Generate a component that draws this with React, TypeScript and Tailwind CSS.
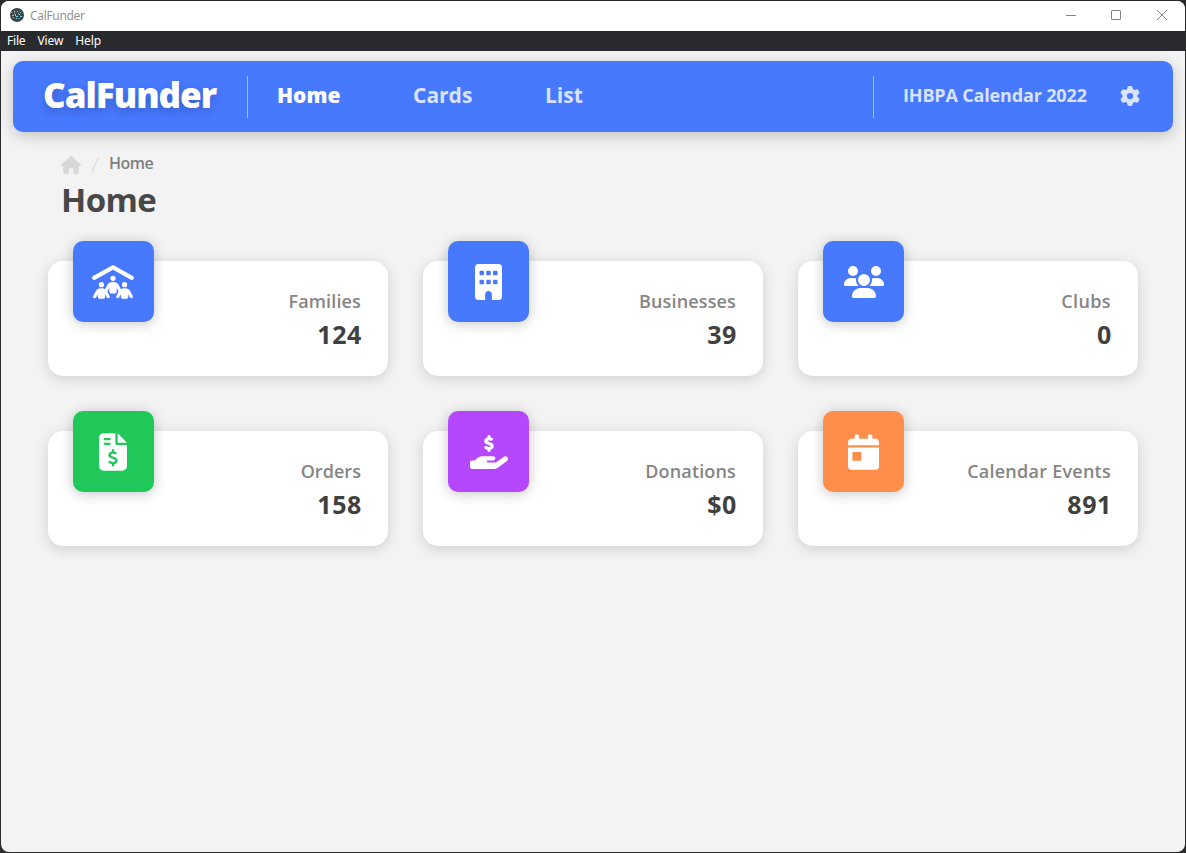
import React from "react";
import { FaBuilding, FaCalendarDay, FaFileInvoiceDollar, FaGear, FaHandHoldingDollar, FaHouse, FaPeopleRoof, FaUsers } from "react-icons/fa6";

type Stat = { label: string; value: string; labelTrack: string; color: string; icon: React.ReactNode };

const stats: Stat[] = [
  { label: "Families", value: "124", labelTrack: "tracking-[0.15px]", color: "bg-[#4779ff]", icon: <FaPeopleRoof className="mr-[2px] h-[34px] w-[42px]" /> },
  { label: "Businesses", value: "39", labelTrack: "tracking-[0.15px]", color: "bg-[#4779ff]", icon: <FaBuilding className="h-[36px] w-[27px]" /> },
  { label: "Clubs", value: "0", labelTrack: "tracking-[0.4px]", color: "bg-[#4779ff]", icon: <FaUsers className="h-[32px] w-[40px]" /> },
  { label: "Orders", value: "158", labelTrack: "tracking-[0.05px]", color: "bg-[#1fc858]", icon: <FaFileInvoiceDollar className="mr-[2px] h-[38px] w-[28px]" /> },
  { label: "Donations", value: "$0", labelTrack: "tracking-[0.15px]", color: "bg-[#b548ff]", icon: <FaHandHoldingDollar className="h-[34px] w-[38px]" /> },
  { label: "Calendar Events", value: "891", labelTrack: "tracking-[0.25px]", color: "bg-[#ff8e4a]", icon: <FaCalendarDay className="h-[36px] w-[31px]" /> },
];

function StatCard({ stat }: { stat: Stat }) {
  return (
    <div className="flex h-[115px] justify-between rounded-[15px] bg-white pl-[25px] pr-[27px] shadow-[0_3px_14px_rgba(0,0,0,0.15)]">
      <div className={`-mt-5 flex size-[81px] items-center justify-center rounded-[10px] text-white shadow-[0_2px_13px_rgba(0,0,0,0.22)] ${stat.color}`}>
        {stat.icon}
      </div>
      <div className="flex flex-col items-end pt-[27px]">
        <span className={`text-[18px] font-[550] leading-[27px] text-[#858585] ${stat.labelTrack}`}>{stat.label}</span>
        <span className="-mr-px mt-px text-[25px] font-bold leading-[36px] tracking-[0.6px] text-[#404040]">{stat.value}</span>
      </div>
    </div>
  );
}

export default function App() {
  return (
    <div className="h-[853px] w-[1186px] bg-[#2b2b2b] p-px font-['Open_Sans',sans-serif]">
      <div className="flex h-full flex-col overflow-hidden rounded-[8px] bg-[#f3f3f3]">
        <div className="flex h-[30px] shrink-0 items-center bg-white pl-[9px] pr-[17px]">
          <svg className="-mt-[2px] size-[14px]" viewBox="0 0 14 14">
            <circle cx="7" cy="7" r="7" fill="#3e454b" />
            <path d="M1.5 4.5h1M4 3.500h1.500M7 3.500h1M10 4.500h1M2 7.500h2M5 6.500h1M6 8.500h2M9 6.500h1.500M10 8.500h2M3 9.500h1M6 10.500h1M8.500 10.500h1M4 5.500h1M8 5.500h1M5 7.500h1" stroke="#78cbdc" strokeWidth="1" />
          </svg>
          <span className="ml-[6px] flex-1 font-['Noto_Sans',sans-serif] text-[12px] leading-4 text-[#929292] tracking-[-0.32px]">CalFunder</span>
          <svg className="-mt-[2px] h-[12px] w-[102px]" viewBox="0 0 102 12" fill="none" stroke="#858585">
            <path d="M0 6.500h10" />
            <rect x="45.500" y="1.500" width="9" height="9" rx="0.500" />
            <path d="M91 1l10 10M101 1l-10 10" />
          </svg>
        </div>
        <div className="flex h-5 shrink-0 items-center gap-[12px] bg-[#292a2d] pl-[6px] font-['Noto_Sans',sans-serif] text-[12px] leading-5 text-white">
          <span className="tracking-[-0.2px]">File</span>
          <span className="tracking-[-0.1px]">View</span>
          <span className="tracking-[-0.1px]">Help</span>
        </div>

        <nav className="mx-3 mt-[10px] flex h-[71px] shrink-0 items-center rounded-[10px] bg-[#4779ff] pl-[30px] pr-[33px] text-white shadow-[0_4px_15px_rgba(0,0,0,0.2)]">
          <span className="-mt-[4px] w-[204px] whitespace-nowrap text-[35px] font-extrabold leading-none tracking-[-1px] [text-shadow:0_4px_10px_rgba(0,0,0,0.2)]">CalFunder</span>
          <div className="h-[42px] w-px bg-white/50" />
          <span className="-mt-[2px] ml-[29px] w-[136px] text-[21px] font-extrabold leading-none">Home</span>
          <span className="-mt-[2px] w-[132px] text-[21px] font-bold leading-none text-[#d9e3ff]">Cards</span>
          <span className="-mt-[2px] flex-1 text-[21px] font-bold leading-none text-[#d9e3ff]">List</span>
          <div className="h-[42px] w-px bg-white/50" />
          <span className="-mt-[3px] ml-[29px] w-[217px] whitespace-nowrap text-[18px] font-bold leading-none tracking-[-0.16px] text-[#d9e3ff]">IHBPA Calendar 2022</span>
          <FaGear className="-mt-px size-5 text-[#d9e3ff]" />
        </nav>

        <main className="px-[47px] pt-[19px]">
          <div className="flex h-6 items-center pl-[13px]">
            <FaHouse className="mt-[4px] h-[18px] w-5 text-[#d8d8d8]" />
            <svg className="ml-[10px] mt-[3px] h-4 w-2" viewBox="0 0 8 16"><path d="M0.500 15.500L7.500 0.500" stroke="#d4d4d4" /></svg>
            <span className="ml-[10px] text-[16px] font-semibold leading-6 tracking-[-0.5px] text-[#808080]">Home</span>
          </div>
          <h1 className="pl-[13px] text-[33px] font-bold leading-[50px] tracking-[-0.6px] text-[#484848]">Home</h1>
          <div className="mt-[36px] grid grid-cols-[340px_340px_340px] gap-x-[35px] gap-y-[55px]">
            {stats.map((s) => <StatCard key={s.label} stat={s} />)}
          </div>
        </main>
      </div>
    </div>
  );
}
